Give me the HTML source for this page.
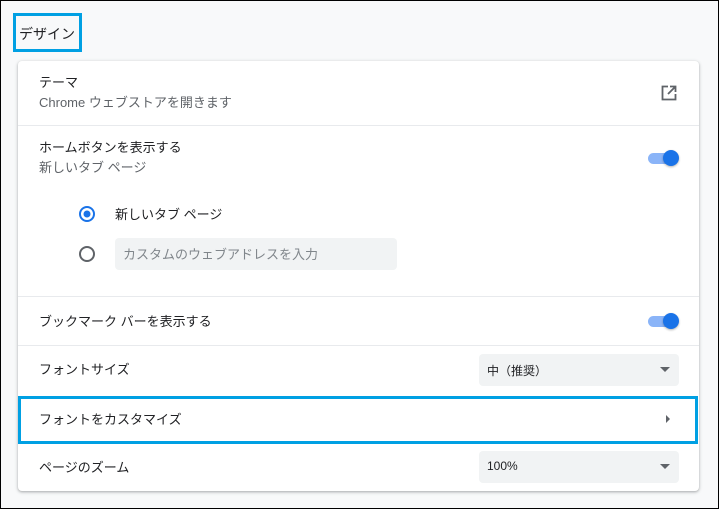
<!DOCTYPE html>
<html><head><meta charset="utf-8"><style>
*{box-sizing:border-box;margin:0;padding:0}
body{width:719px;height:509px;background:#f8f9fa;font-family:"Liberation Sans","Noto Sans CJK JP",sans-serif;position:relative;overflow:hidden;color:#202124}
.frame{position:absolute;left:0;top:0;width:719px;height:509px;border:1px solid #000;}
.a{position:absolute;white-space:nowrap}
.card{position:absolute;left:18px;top:61px;width:681px;height:430px;background:#fff;border-radius:4px;box-shadow:0 1px 2px rgba(60,64,67,.3),0 1px 3px 1px rgba(60,64,67,.12)}
.t{font-size:13px;color:#202124}
.s{font-size:13px;color:#5f6368}
.hr{position:absolute;left:18px;width:681px;height:1px;background:#e8eaed}
.tog{position:absolute;width:34px;height:12px}
.tog .tr{position:absolute;left:0;top:1px;width:26px;height:11px;border-radius:6px;background:#8ab4f8}
.tog .kn{position:absolute;left:15px;top:-2px;width:16px;height:16px;border-radius:50%;background:#1a73e8;box-shadow:0 1px 2px rgba(0,0,0,.3)}
.sel{position:absolute;background:#f1f3f4;border-radius:4px;width:200px;height:32px;font-size:12px;color:#202124;padding:8px 8px}
.sel:after{content:"";position:absolute;right:9px;top:13px;border-left:5px solid transparent;border-right:5px solid transparent;border-top:5px solid #5f6368}
</style></head><body>
<div class="frame"></div>
<div class="a" style="left:13px;top:13px;width:69px;height:39px;border:3px solid #00a0e3"></div>
<div class="a" style="left:19px;top:24px;font-size:14px;color:#202124">デザイン</div>
<div class="card"></div>
<div class="a t" style="left:39px;top:72px">テーマ</div>
<div class="a s" style="left:39px;top:92px">Chrome ウェブストアを開きます</div>
<svg class="a" style="left:661px;top:85px" width="16" height="16" viewBox="0 0 16 16"><path d="M7 1.5H1.5v13h13V9" fill="none" stroke="#5f6368" stroke-width="1.8"/><path d="M9 1.5h5.5V7M14.5 1.5L7 9" fill="none" stroke="#5f6368" stroke-width="1.8"/></svg>
<div class="hr" style="top:125px"></div>
<div class="a t" style="left:39px;top:137px">ホームボタンを表示する</div>
<div class="a s" style="left:39px;top:157px">新しいタブ ページ</div>
<div class="tog" style="left:648px;top:152px"><div class="tr"></div><div class="kn"></div></div>
<svg class="a" style="left:78px;top:205px" width="18" height="18"><circle cx="9" cy="9" r="7" fill="none" stroke="#1a73e8" stroke-width="2"/><circle cx="9" cy="9" r="3.5" fill="#1a73e8"/></svg>
<div class="a t" style="left:115px;top:204px">新しいタブ ページ</div>
<svg class="a" style="left:78px;top:245px" width="18" height="18"><circle cx="9" cy="9" r="7" fill="none" stroke="#5f6368" stroke-width="2"/></svg>
<div class="a" style="left:115px;top:238px;width:282px;height:32px;background:#f1f3f4;border-radius:4px"></div>
<div class="a s" style="left:123px;top:244px;color:#80868b">カスタムのウェブアドレスを入力</div>
<div class="hr" style="top:296px"></div>
<div class="a t" style="left:39px;top:311px">ブックマーク バーを表示する</div>
<div class="tog" style="left:648px;top:315px"><div class="tr"></div><div class="kn"></div></div>
<div class="hr" style="top:345px"></div>
<div class="a t" style="left:39px;top:359px">フォントサイズ</div>
<div class="sel" style="left:479px;top:354px">中（推奨）</div>
<div class="a" style="left:18px;top:396px;width:680px;height:48px;border:3px solid #00a0e3"></div>
<div class="a t" style="left:39px;top:409px">フォントをカスタマイズ</div>
<div class="a" style="left:666px;top:415px;border-top:4px solid transparent;border-bottom:4px solid transparent;border-left:4px solid #5f6368"></div>
<div class="a t" style="left:39px;top:457px">ページのズーム</div>
<div class="sel" style="left:479px;top:451px">100%</div>
</body></html>
